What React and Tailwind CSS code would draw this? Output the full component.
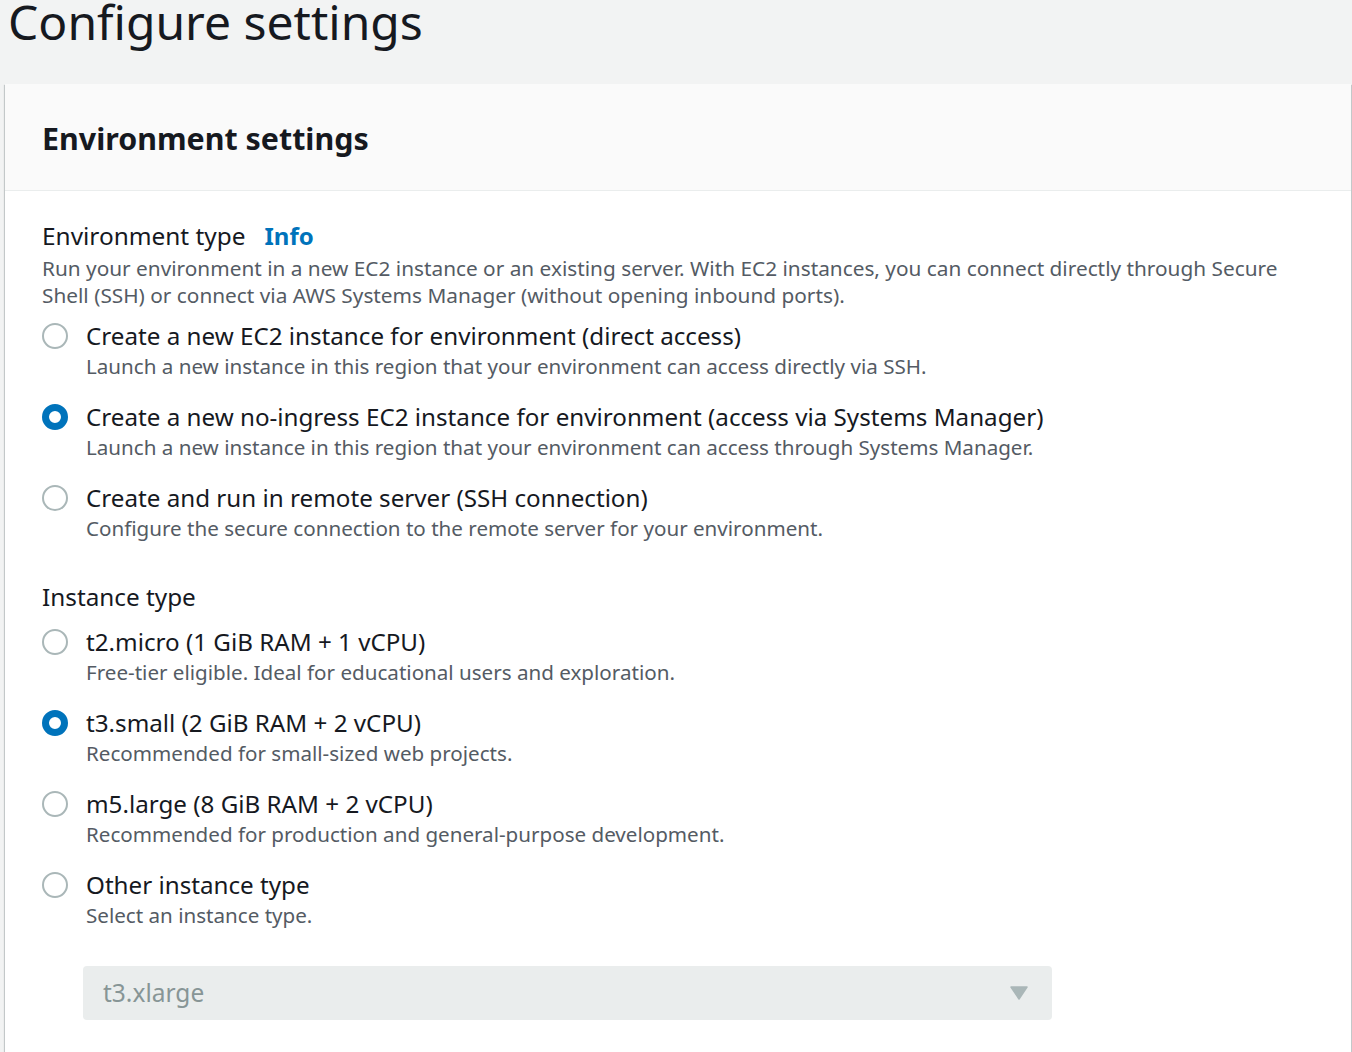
import React from 'react';

const envOptions = [
  {
    id: 'direct',
    label: 'Create a new EC2 instance for environment (direct access)',
    desc: 'Launch a new instance in this region that your environment can access directly via SSH.',
  },
  {
    id: 'ssm',
    label: 'Create a new no-ingress EC2 instance for environment (access via Systems Manager)',
    desc: 'Launch a new instance in this region that your environment can access through Systems Manager.',
  },
  {
    id: 'remote',
    label: 'Create and run in remote server (SSH connection)',
    desc: 'Configure the secure connection to the remote server for your environment.',
  },
];

const instanceOptions = [
  { id: 't2', label: 't2.micro (1 GiB RAM + 1 vCPU)', desc: 'Free-tier eligible. Ideal for educational users and exploration.' },
  { id: 't3', label: 't3.small (2 GiB RAM + 2 vCPU)', desc: 'Recommended for small-sized web projects.' },
  { id: 'm5', label: 'm5.large (8 GiB RAM + 2 vCPU)', desc: 'Recommended for production and general-purpose development.' },
  { id: 'other', label: 'Other instance type', desc: 'Select an instance type.' },
];

const Radio = ({ checked }) => (
  <span
    className={`mt-[3px] block h-[26px] w-[26px] shrink-0 rounded-full bg-white ${
      checked ? 'border-[7px] border-[#0073bb]' : 'border-2 border-[#aab7b8]'
    }`}
  />
);

const RadioGroup = ({ options, value }) => (
  <div className="flex flex-col gap-[19px]">
    {options.map((o) => (
      <label key={o.id} className="flex items-start gap-[18px]">
        <Radio checked={o.id === value} />
        <div className="flex flex-col">
          <span className="text-[24.2px] leading-[31px] text-[#16191f]">{o.label}</span>
          <span className="text-[20.6px] leading-[31px] text-[#545b64]">{o.desc}</span>
        </div>
      </label>
    ))}
  </div>
);

export default function App() {
  return (
    <div
      className="min-h-[1052px] bg-[#f2f3f3] pl-[5px] pr-[1px]"
      style={{ fontFamily: '"Noto Sans", "Open Sans", Arial, sans-serif' }}
    >
      <h1 className="-mt-[10px] pl-[3px] text-[48px] leading-[64px] text-[#16191f]">Configure settings</h1>

      <div className="mt-[30px] bg-white shadow-[0_1px_1px_0_rgba(0,28,36,0.3),1px_1px_1px_0_rgba(0,28,36,0.15),-1px_1px_1px_0_rgba(0,28,36,0.15)]">
        <div className="flex h-[107px] items-center border-b border-[#eaeded] bg-[#fafafa] px-[37px]">
          <h2 className="mt-[3px] text-[30.4px] font-bold text-[#16191f]">Environment settings</h2>
        </div>

        <div className="px-[37px] pb-[32px] pt-[28px]">
          <div className="flex items-baseline gap-[19px]">
            <span className="text-[24.4px] leading-[34px] text-[#16191f]">Environment type</span>
            <a className="text-[24px] font-bold leading-[34px] text-[#0073bb]">Info</a>
          </div>
          <p className="mt-[2px] text-[20.8px] leading-[27px] text-[#545b64]">
            Run your environment in a new EC2 instance or an existing server. With EC2 instances, you can connect directly
            through Secure Shell (SSH) or connect via AWS Systems Manager (without opening inbound ports).
          </p>
          <div className="mt-[11px]">
            <RadioGroup options={envOptions} value="ssm" />
          </div>

          <div className="mt-[36px] text-[24.3px] leading-[34px] text-[#16191f]">Instance type</div>
          <div className="mt-[12px]">
            <RadioGroup options={instanceOptions} value="t3" />
          </div>

          <div className="ml-[41px] mt-[35px] flex h-[54px] w-[969px] items-center justify-between rounded-[4px] bg-[#eaeded] pl-[20px] pr-[24px]">
            <span className="text-[24.5px] text-[#879596]">t3.xlarge</span>
            <svg width="18" height="14" viewBox="0 0 18 14">
              <path d="M1 1 H17 L9 13 Z" fill="#aab7b8" stroke="#aab7b8" strokeWidth="1.5" strokeLinejoin="round" />
            </svg>
          </div>
        </div>
      </div>
    </div>
  );
}
